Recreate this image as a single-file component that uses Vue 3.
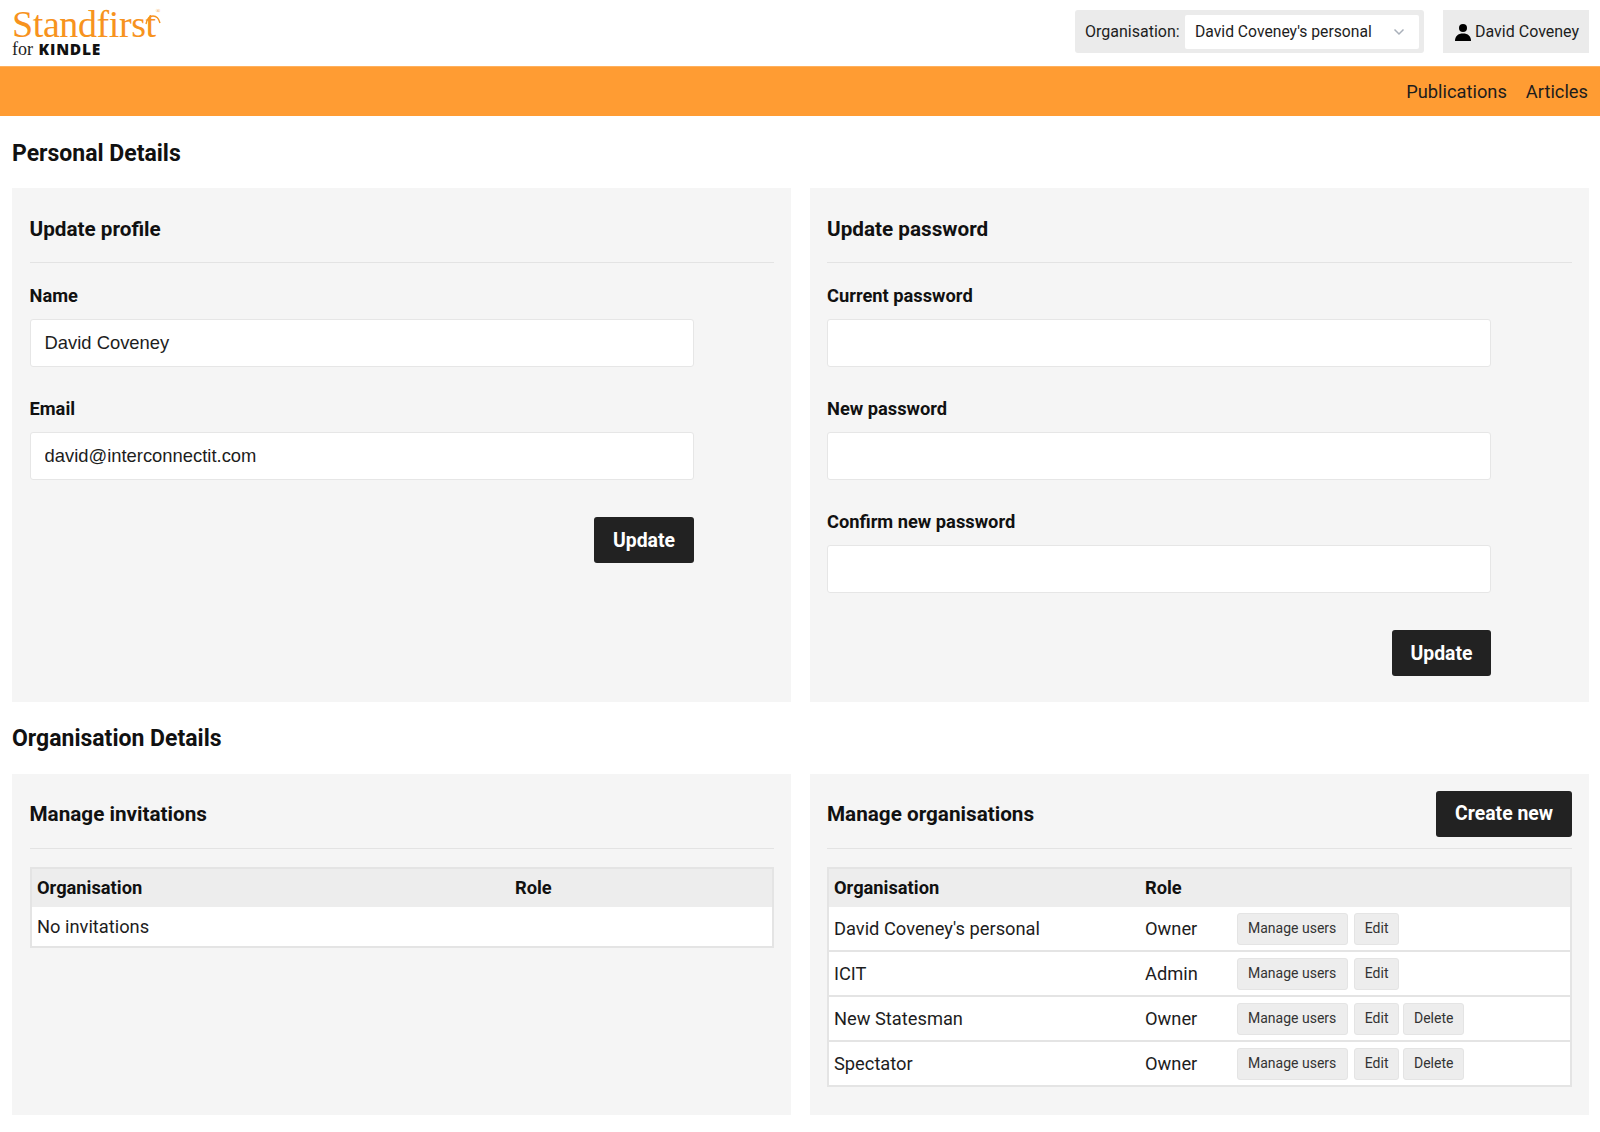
<script setup>
const orgs = [
  { name: "David Coveney's personal", role: 'Owner', canDelete: false },
  { name: 'ICIT', role: 'Admin', canDelete: false },
  { name: 'New Statesman', role: 'Owner', canDelete: true },
  { name: 'Spectator', role: 'Owner', canDelete: true }
]
</script>

<template>
  <div class="page">
    <header class="topbar">
      <div class="logo">
        <div class="logo-word">Standfirst<span class="logo-reg">®</span></div>
        <svg class="logo-arcs" width="160" height="40" viewBox="0 0 160 40" fill="none">
          <path d="M134 19c1-5 3-8 7-8s6 3 7 7" stroke="#f7931e" stroke-width="1.4" />
        </svg>
        <div class="logo-sub">for <b>KINDLE</b></div>
      </div>
      <div class="topbar-right">
        <div class="org-picker">
          <span class="org-label">Organisation:</span>
          <div class="org-select">
            <span>David Coveney's personal</span>
            <svg width="12" height="8" viewBox="0 0 12 8" fill="none">
              <path d="M1.500 1.500l4.500 4.500 4.500-4.500" stroke="#a9b0ba" stroke-width="1.500" />
            </svg>
          </div>
        </div>
        <div class="user-box">
          <svg width="18" height="18" viewBox="0 0 18 18" fill="#000">
            <circle cx="9" cy="5" r="4" />
            <path d="M1 18c0-5 3-7.500 8-7.500s8 2.500 8 7.500z" />
          </svg>
          <span>David Coveney</span>
        </div>
      </div>
    </header>

    <nav class="navbar">
      <a>Publications</a>
      <a>Articles</a>
    </nav>

    <main class="content">
      <h2 class="section-title">Personal Details</h2>
      <div class="card-grid">
        <section class="card">
          <div class="card-head"><h3>Update profile</h3></div>
          <form class="form">
            <label>Name</label>
            <input type="text" value="David Coveney" />
            <label>Email</label>
            <input type="text" value="david@interconnectit.com" />
            <div class="form-actions"><button type="button" class="btn-dark">Update</button></div>
          </form>
        </section>
        <section class="card">
          <div class="card-head"><h3>Update password</h3></div>
          <form class="form">
            <label>Current password</label>
            <input type="password" />
            <label>New password</label>
            <input type="password" />
            <label>Confirm new password</label>
            <input type="password" />
            <div class="form-actions"><button type="button" class="btn-dark">Update</button></div>
          </form>
        </section>
      </div>

      <h2 class="section-title second">Organisation Details</h2>
      <div class="card-grid lower">
        <section class="card">
          <div class="card-head"><h3>Manage invitations</h3></div>
          <table class="table invites">
            <thead>
              <tr><th class="col-inv">Organisation</th><th>Role</th></tr>
            </thead>
            <tbody>
              <tr><td colspan="2">No invitations</td></tr>
            </tbody>
          </table>
        </section>
        <section class="card">
          <div class="card-head">
            <h3>Manage organisations</h3>
            <button type="button" class="btn-dark">Create new</button>
          </div>
          <table class="table orgs">
            <thead>
              <tr><th class="col-org">Organisation</th><th class="col-role">Role</th><th></th></tr>
            </thead>
            <tbody>
              <tr v-for="org in orgs" :key="org.name">
                <td>{{ org.name }}</td>
                <td>{{ org.role }}</td>
                <td>
                  <div class="actions">
                    <button type="button" class="btn-small">Manage users</button>
                    <button type="button" class="btn-small">Edit</button>
                    <button v-if="org.canDelete" type="button" class="btn-small">Delete</button>
                  </div>
                </td>
              </tr>
            </tbody>
          </table>
        </section>
      </div>
    </main>
  </div>
</template>

<style>
body {
  background: #fff;
}
</style>

<style scoped>
.page {
  font-family: Roboto, "Liberation Sans", sans-serif;
  color: #1d1d1d;
  font-size: 18px;
}

.topbar {
  height: 66px;
  box-sizing: border-box;
  display: flex;
  justify-content: space-between;
  align-items: flex-start;
  padding: 10px 11px 0 12px;
}

.logo {
  position: relative;
  margin-top: -5px;
}

.logo-word {
  font-family: "Liberation Serif", serif;
  font-size: 38px;
  line-height: 38px;
  color: #f7931e;
  letter-spacing: -0.4px;
}

.logo-arcs {
  position: absolute;
  left: 0;
  top: 0;
}

.logo-reg {
  position: relative;
  top: -24px;
  font-size: 6px;
  line-height: 1;
}

.logo-sub {
  margin-top: -3px;
  font-family: "Liberation Serif", serif;
  font-size: 18px;
  line-height: 18px;
  color: #222;
}

.logo-sub b {
  margin-left: 1px;
  font-family: "Open Sans", sans-serif;
  font-weight: 800;
  font-size: 15.500px;
  letter-spacing: 0.8px;
  color: #111;
}

.topbar-right {
  display: flex;
  gap: 19px;
}

.org-picker {
  width: 349px;
  height: 43px;
  box-sizing: border-box;
  display: flex;
  align-items: center;
  justify-content: space-between;
  padding: 0 5px 0 10px;
  background: #ebebeb;
  border-radius: 3px;
  font-size: 16px;
}

.org-select {
  width: 234px;
  height: 34px;
  box-sizing: border-box;
  display: flex;
  align-items: center;
  justify-content: space-between;
  padding: 0 14px 0 10px;
  background: #fff;
  border-radius: 2px;
  font-size: 15.700px;
}

.user-box {
  width: 146px;
  height: 43px;
  box-sizing: border-box;
  display: flex;
  align-items: center;
  gap: 3px;
  padding-left: 11px;
  background: #ebebeb;
  font-size: 16px;
}

.navbar {
  height: 50px;
  display: flex;
  justify-content: flex-end;
  align-items: center;
  gap: 19px;
  padding-right: 12px;
  box-sizing: border-box;
  background: #ff9c33;
  box-shadow: inset 0 1px 0 #ffb05c;
  font-size: 18.300px;
}

.content {
  padding: 0 11px 0 12px;
}

.section-title {
  margin: 0;
  height: 72px;
  padding-top: 3px;
  box-sizing: border-box;
  display: flex;
  align-items: center;
  font-size: 23px;
  font-weight: 700;
  color: #111;
}

.section-title.second {
  padding-top: 1px;
}

.card-grid {
  display: grid;
  grid-template-columns: 1fr 1fr;
  gap: 19px;
}

.card {
  background: #f5f5f5;
  padding: 0 17px 26px 17.500px;
}

.card:nth-child(2) {
  padding-left: 17px;
}

.card-head {
  height: 75px;
  box-sizing: border-box;
  padding-top: 7px;
  display: flex;
  justify-content: space-between;
  align-items: center;
  border-bottom: 1px solid #e3e3e3;
}

.lower .card-head {
  padding-top: 5px;
}

.card-head h3 {
  margin: 0;
  font-size: 20.700px;
  font-weight: 700;
  color: #111;
}

.form {
  width: 664px;
  padding-top: 20px;
}

.form label {
  display: block;
  height: 25px;
  line-height: 25px;
  margin-bottom: 11px;
  font-size: 18.300px;
  font-weight: 700;
  color: #111;
}

.form input {
  display: block;
  width: 100%;
  height: 48px;
  box-sizing: border-box;
  margin-bottom: 29px;
  padding: 0 14px 1px;
  border: 1px solid #e6e6e6;
  border-radius: 3px;
  background: #fff;
  font: 18.400px "Liberation Sans", sans-serif;
  color: #1d1d1d;
}

.form-actions {
  display: flex;
  justify-content: flex-end;
  padding-top: 8px;
}

.btn-dark {
  height: 46px;
  padding: 0 18.500px;
  border: 0;
  border-radius: 3px;
  background: #222;
  color: #fff;
  font: 700 19.400px Roboto, sans-serif;
}

.card-head .btn-dark {
  padding: 0 19px;
}

.table {
  width: 100%;
  margin: 18px 0 2px;
  border-collapse: collapse;
  border: 2px solid #e4e4e4;
  background: #fff;
  font-size: 18.300px;
}

.table th {
  height: 36px;
  padding: 0 5.500px 2px;
  background: #ededed;
  font-size: 18.300px;
  font-weight: 700;
  text-align: left;
  color: #111;
}

.table td {
  padding: 0 5.500px;
}

.invites td {
  height: 39px;
}

.col-inv {
  width: 467px;
}

.orgs th {
  padding: 0 5px 2px;
}

.orgs td {
  padding: 0 5px;
}

.col-org {
  width: 301px;
}

.col-role {
  width: 82px;
}

.orgs td {
  height: 43px;
  border-bottom: 2px solid #e4e4e4;
}

.actions {
  display: flex;
  align-items: center;
  gap: 4px;
}

.btn-small {
  height: 32px;
  padding: 0 10px 2px;
  border: 1px solid #e4e4e4;
  border-radius: 3px;
  background: #ededed;
  color: #333;
  font: 14px Roboto, sans-serif;
}

.btn-small:first-child {
  margin-right: 2px;
  padding: 0 11px 2px 10px;
}

.btn-small:nth-child(2) {
  padding: 0 9.500px 2px;
}
</style>
